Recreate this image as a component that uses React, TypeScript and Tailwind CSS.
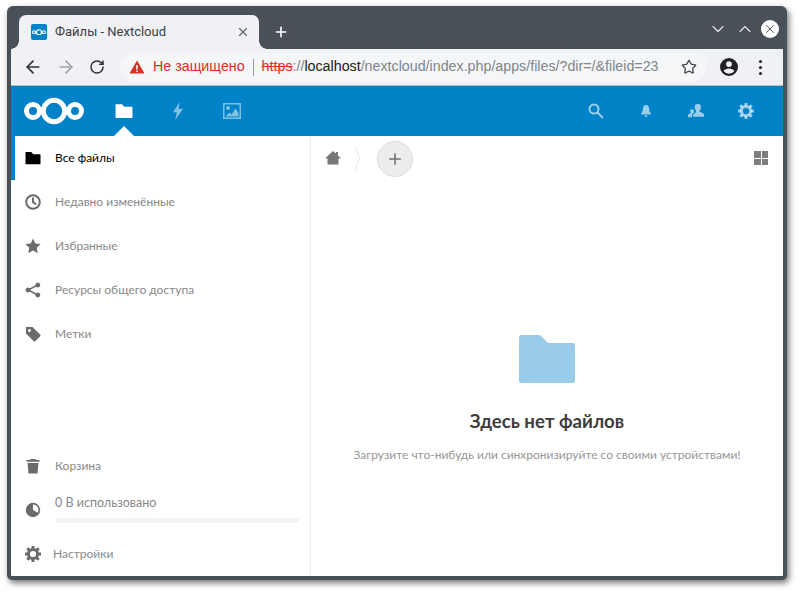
import { ReactNode } from 'react';
import { ArrowLeft, ArrowRight, ChevronDown, ChevronUp, Plus, RotateCw, Star, X } from 'lucide-react';

const uiFont = "[font-family:'Liberation_Sans',Arial,sans-serif]";

function Logo({ className }: { className: string }) {
    return (
        <svg viewBox="0 0 60 28" className={className} fill="none" stroke="currentColor">
            <circle cx="30" cy="14" r="10.7" strokeWidth="5" />
            <circle cx="9" cy="14" r="6.5" strokeWidth="5" />
            <circle cx="51" cy="14" r="6.5" strokeWidth="5" />
        </svg>
    );
}

function FolderIcon({ className }: { className: string }) {
    return (
        <svg viewBox="0 0 16 16" className={className} fill="currentColor">
            <path d="M1 2h5.200L8.400 4.200H15a.5.5 0 0 1 .5.5v9a.5.5 0 0 1-.5.5H1a.5.5 0 0 1-.5-.5v-11A.5.5 0 0 1 1 2z" />
        </svg>
    );
}

function Gear({ className }: { className: string }) {
    return (
        <svg viewBox="0 0 16 16" className={className} fill="none" stroke="currentColor">
            <circle cx="8" cy="8" r="4.600" strokeWidth="3" />
            <g strokeWidth="3" strokeLinecap="butt">
                <path d="M8 0v3M8 13v3M0 8h3M13 8h3M2.300 2.300l2.100 2.100M11.600 11.600l2.100 2.100M2.300 13.700l2.100-2.100M11.600 4.400l2.100-2.100" />
            </g>
        </svg>
    );
}

function NavItem({ icon, label, active }: { icon: ReactNode; label: string; active?: boolean }) {
    return (
        <div className={`flex h-11 items-center border-l-4 ${active ? 'border-[#0082c9] text-black' : 'border-transparent text-[#888]'}`}>
            <div className={`flex w-9 justify-center ${active ? 'text-black' : 'text-[#6b6b6b]'}`}>{icon}</div>
            <span className="ml-1 text-[12px]">{label}</span>
        </div>
    );
}

export default function App() {
    return (
        <div className="h-[594px] w-[800px] overflow-hidden bg-white pl-[7px] pt-[6px]">
            <div className={`flex h-[574px] w-[780px] flex-col overflow-hidden rounded-t-[6px] rounded-b-[5px] border-x-4 border-b-4 border-[#4a5058] bg-[#4a5058] shadow-[2px_3px_6px_rgba(0,0,0,0.55)] ${uiFont}`}>
                {/* tab strip */}
                <div className="flex h-[43px] shrink-0 items-end pl-2">
                    <div className="relative flex h-[34px] w-[240px] items-center rounded-t-[7px] bg-[#eff1f4] pl-3 pr-[9px]">
                        <div className="absolute bottom-0 left-[-8px] h-2 w-2 bg-[radial-gradient(circle_at_0_0,transparent_7.5px,#eff1f4_8px)]" />
                        <div className="absolute bottom-0 right-[-8px] h-2 w-2 bg-[radial-gradient(circle_at_100%_0,transparent_7.5px,#eff1f4_8px)]" />
                        <div className="flex h-4 w-4 items-center justify-center rounded-[2px] bg-[#0082c9] text-white">
                            <Logo className="w-3.5" />
                        </div>
                        <span className="ml-2 flex-1 text-[13px] text-[#3c4043] [font-family:Roboto,sans-serif]">Файлы - Nextcloud</span>
                        <X size={14} strokeWidth={2} className="text-[#5f6368]" />
                    </div>
                    <div className="ml-3 flex h-[34px] w-5 items-center justify-center text-white">
                        <Plus size={16} strokeWidth={2.4} />
                    </div>
                    <div className="flex h-[43px] flex-1 items-center justify-end gap-[6.5px] pr-1 pt-[3px] text-[#e8eaed]">
                        <ChevronDown size={20} strokeWidth={1.3} />
                        <ChevronUp size={20} strokeWidth={1.3} />
                        <div className="flex h-[18px] w-[18px] items-center justify-center rounded-full bg-white text-[#3c4043]">
                            <X size={14} strokeWidth={1.5} />
                        </div>
                    </div>
                </div>

                {/* browser toolbar */}
                <div className="flex h-[37px] shrink-0 items-center border-b border-[#b9bcc0] bg-[#eff1f4] pl-[12px]">
                    <ArrowLeft size={20} strokeWidth={2} className="text-[#2e3033]" />
                    <ArrowRight size={20} strokeWidth={2} className="ml-[13px] text-[#a0a2a5]" />
                    <RotateCw size={16} strokeWidth={2.2} className="ml-[13px] text-[#2e3033]" />
                    <div className="ml-[15px] flex h-7 w-[587px] items-center rounded-full bg-[#f5f6f8] pl-[9px] text-[14.25px]">
                        <svg viewBox="0 0 16 16" className="h-4 w-4 text-[#d93025]" fill="currentColor">
                            <path d="M8 1.500 15.500 14.500H.5zM7.200 6v4.500h1.600V6zm0 5.500v1.500h1.600v-1.500z" fillRule="evenodd" />
                        </svg>
                        <span className="ml-[8px] text-[#d93025]">Не защищено</span>
                        <div className="mx-2 h-[17px] w-px bg-[#9a9da1]" />
                        <span className="text-[#d93025] line-through">https</span>
                        <span className="text-[#80868b]">://</span>
                        <span className="text-[#202124]">localhost</span>
                        <span className="text-[#80868b]">/nextcloud/index.php/apps/files/?dir=/&amp;fileid=23</span>
                        <Star size={16} strokeWidth={2} className="ml-auto mr-[10px] text-[#4a4d50]" />
                    </div>
                    <svg viewBox="0 0 20 20" className="ml-[13px] h-[18px] w-[18px] text-[#202124]" fill="currentColor">
                        <path fillRule="evenodd" d="M10 0a10 10 0 1 0 0 20 10 10 0 0 0 0-20zm0 3.500a3.200 3.200 0 1 1 0 6.400 3.200 3.200 0 0 1 0-6.400zm0 14a7.600 7.600 0 0 1-6-3c.5-1.900 4-2.900 6-2.900s5.500 1 6 2.900a7.600 7.600 0 0 1-6 3z" />
                    </svg>
                    <div className="ml-[21px] flex flex-col gap-[3px]">
                        <div className="h-[3px] w-[3px] rounded-full bg-[#202124]" />
                        <div className="h-[3px] w-[3px] rounded-full bg-[#202124]" />
                        <div className="h-[3px] w-[3px] rounded-full bg-[#202124]" />
                    </div>
                </div>

                {/* nextcloud header */}
                <div className="relative flex h-[50px] shrink-0 items-center bg-[#0082c9] pl-[13px] pr-[29px] text-white">
                    <Logo className="w-[60px]" />
                    <div className="ml-[31px] flex items-center gap-[36px]">
                        <FolderIcon className="h-[18px] w-[18px]" />
                        <svg viewBox="0 0 16 16" className="h-[18px] w-[18px] text-white/50" fill="currentColor">
                            <path d="M9.500 0 3.500 9h3.500L5.500 16l7-10H8.500z" />
                        </svg>
                        <svg viewBox="0 0 18 16" className="h-4 w-[18px] text-white/50" fill="currentColor">
                            <path fillRule="evenodd" d="M0 0h18v16H0zm1.500 1.500v13h15v-13zM5 3a2 2 0 1 1 0 4 2 2 0 0 1 0-4zM2.500 13.500l4-4 2 2 4-6 3 4.500v3.500z" />
                        </svg>
                    </div>
                    <div className="ml-auto flex items-center gap-[34px] text-white/60">
                        <svg viewBox="0 0 16 16" className="h-4 w-4" fill="none" stroke="currentColor" strokeWidth="2">
                            <circle cx="6" cy="6" r="4.500" />
                            <path d="M9.500 9.500 15 15" />
                        </svg>
                        <svg viewBox="0 0 16 16" className="h-4 w-4" fill="currentColor">
                            <path d="M8 2c2.200 0 3.100 1.800 3.100 3.800 0 2.400 1 3.700 1.900 4.700v1H3v-1c.9-1 1.900-2.300 1.900-4.700C4.900 3.800 5.800 2 8 2zM6.500 12.500h3a1.500 1.500 0 0 1-3 0z" />
                        </svg>
                        <svg viewBox="0 0 18 16" className="h-4 w-4" fill="currentColor">
                            <path d="M11 0a3.500 3.500 0 0 1 3.500 3.800c0 1.500-.6 3-1.400 3.800v1.200c1 .8 4.200 1.200 4.900 3.200v2.500H5.500v-2c.5-1.500 3.400-2 3.500-3.700V7.600C8.200 6.800 7.500 5.300 7.500 3.800A3.500 3.500 0 0 1 11 0zM4.500 6c1.200 0 2 .8 2.200 2l.2 1.800c-.5.900-2 1.300-2.400 2.400V15H0v-2.500c.5-1.400 2.500-1.500 3-2.300V9C2.500 8.500 2.300 7.800 2.300 7.200 2.600 6.500 3.500 6 4.500 6z" />
                        </svg>
                        <Gear className="h-4 w-4" />
                    </div>
                    <div className="absolute bottom-0 left-[103px] h-0 w-0 border-x-[10px] border-b-[10px] border-x-transparent border-b-white" />
                </div>

                {/* app body */}
                <div className="flex min-h-0 flex-1 bg-white [font-family:Lato,sans-serif]">
                    <div className="flex w-[300px] shrink-0 flex-col border-r border-[#ededed]">
                        <NavItem active label="Все файлы" icon={<FolderIcon className="h-4 w-4" />} />
                        <NavItem
                            label="Недавно изменённые"
                            icon={
                                <svg viewBox="0 0 16 16" className="h-4 w-4" fill="none" stroke="currentColor" strokeWidth="2">
                                    <circle cx="8" cy="8" r="6.800" />
                                    <path d="M8 3.500V8l3 2.500" />
                                </svg>
                            }
                        />
                        <NavItem
                            label="Избранные"
                            icon={
                                <svg viewBox="0 0 16 16" className="h-4 w-4" fill="currentColor">
                                    <path d="m8 .5 2.300 5 5.400.6-4 3.700 1.100 5.400L8 12.500 3.200 15.200l1.100-5.400-4-3.700 5.400-.6z" />
                                </svg>
                            }
                        />
                        <NavItem
                            label="Ресурсы общего доступа"
                            icon={
                                <svg viewBox="0 0 16 16" className="h-4 w-4" fill="currentColor" stroke="currentColor">
                                    <circle cx="12.800" cy="3" r="2" />
                                    <circle cx="3" cy="8" r="2" />
                                    <circle cx="12.800" cy="13" r="2" />
                                    <path d="M12.800 3 3 8l9.800 5" fill="none" strokeWidth="1.500" />
                                </svg>
                            }
                        />
                        <NavItem
                            label="Метки"
                            icon={
                                <svg viewBox="0 0 16 16" className="h-4 w-4" fill="currentColor">
                                    <path fillRule="evenodd" d="M1 1h6.500l7.800 7.800a1 1 0 0 1 0 1.400l-5.100 5.100a1 1 0 0 1-1.400 0L1 7.500zm3.500 2a1.500 1.500 0 1 0 0 3 1.500 1.500 0 0 0 0-3z" />
                                </svg>
                            }
                        />

                        <div className="mt-auto">
                            <NavItem
                                label="Корзина"
                                icon={
                                    <svg viewBox="0 0 16 16" className="h-4 w-4" fill="currentColor">
                                        <path d="M5.500 1h5l.5 1h3.500v1.800h-13V2H5zM2.500 5h11l-1 10.500h-9z" />
                                    </svg>
                                }
                            />
                            <div className="flex h-[44px] border-l-4 border-transparent text-[#888]">
                                <div className="flex w-9 items-center justify-center text-[#6b6b6b]">
                                    <svg viewBox="0 0 16 16" className="h-4 w-4" fill="currentColor">
                                        <path fillRule="evenodd" d="M8 .8a7.200 7.200 0 1 0 0 14.400A7.200 7.200 0 0 0 8 .8zm0 1.700v5.500l4.800 2.700A5.500 5.500 0 0 0 8 2.500z" />
                                    </svg>
                                </div>
                                <div className="ml-1 flex-1 pr-[11px] pt-[5px]">
                                    <div className="text-[12.5px] leading-[20px]">0 В использовано</div>
                                    <div className="mt-[5px] h-[5px] rounded-full bg-[#f3f3f3]" />
                                </div>
                            </div>
                            <div className="flex h-[44px] items-center pl-[14px] text-[#888]">
                                <Gear className="h-4 w-4 text-[#6b6b6b]" />
                                <span className="ml-3 text-[12px]">Настройки</span>
                            </div>
                        </div>
                    </div>

                    <div className="flex min-w-0 flex-1 flex-col">
                        <div className="flex h-11 shrink-0 items-center pl-[14px] pr-[15px]">
                            <svg viewBox="0 0 16 16" className="h-4 w-4 text-[#777]" fill="currentColor">
                                <path d="M8 1 11 3.600V2h2v3.400L16 8.500h-2.500v6h-11v-6H0z" />
                            </svg>
                            <svg viewBox="0 0 10 44" className="ml-3 h-[26px] w-[9px] text-[#dedede]" fill="none" stroke="currentColor" strokeWidth="1.200">
                                <path d="M1 2 9 22 1 42" />
                            </svg>
                            <div className="ml-[15px] mt-[2px] flex h-9 w-9 items-center justify-center rounded-full border border-[#dbdbdb] bg-[#ededed] text-[#6e6e6e]">
                                <Plus size={18} strokeWidth={2} />
                            </div>
                            <div className="ml-auto grid grid-cols-2 gap-[1px]">
                                <div className="h-[6.5px] w-[6.5px] bg-[#7d7d7d]" />
                                <div className="h-[6.5px] w-[6.5px] bg-[#7d7d7d]" />
                                <div className="h-[6.5px] w-[6.5px] bg-[#7d7d7d]" />
                                <div className="h-[6.5px] w-[6.5px] bg-[#7d7d7d]" />
                            </div>
                        </div>
                        <div className="flex flex-col items-center pt-[155px]">
                            <svg viewBox="0 0 56 48" className="h-[48px] w-[56px] text-[#9accea]" fill="currentColor">
                                <path d="M2 0h19l8 8h25a2 2 0 0 1 2 2v36a2 2 0 0 1-2 2H2a2 2 0 0 1-2-2V2a2 2 0 0 1 2-2z" />
                            </svg>
                            <h2 className="mt-[26px] text-[18.66px] font-bold leading-[24px] text-[#3d3d3d]">Здесь нет файлов</h2>
                            <p className="mt-[14px] text-[12px] leading-[16px] text-[#969696]">Загрузите что-нибудь или синхронизируйте со своими устройствами!</p>
                        </div>
                    </div>
                </div>
            </div>
        </div>
    );
}
